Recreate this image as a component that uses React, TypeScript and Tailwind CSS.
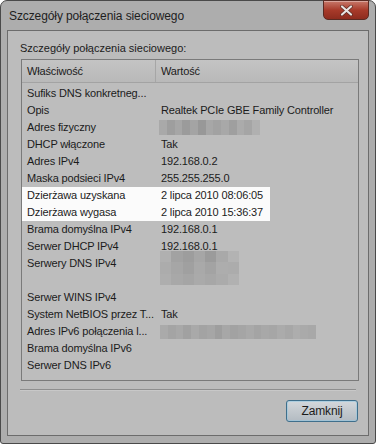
import React from "react";

type Row = { label: string; value?: string; blur?: "mac" | "dns" | "ipv6"; tall?: boolean; hl?: boolean };

const rows: Row[] = [
  { label: "Sufiks DNS konkretneg..." },
  { label: "Opis", value: "Realtek PCIe GBE Family Controller" },
  { label: "Adres fizyczny", blur: "mac" },
  { label: "DHCP włączone", value: "Tak" },
  { label: "Adres IPv4", value: "192.168.0.2" },
  { label: "Maska podsieci IPv4", value: "255.255.255.0" },
  { label: "Dzierżawa uzyskana", value: "2 lipca 2010 08:06:05", hl: true },
  { label: "Dzierżawa wygasa", value: "2 lipca 2010 15:36:37", hl: true },
  { label: "Brama domyślna IPv4", value: "192.168.0.1" },
  { label: "Serwer DHCP IPv4", value: "192.168.0.1" },
  { label: "Serwery DNS IPv4", blur: "dns", tall: true },
  { label: "Serwer WINS IPv4" },
  { label: "System NetBIOS przez T...", value: "Tak" },
  { label: "Adres IPv6 połączenia l...", blur: "ipv6" },
  { label: "Brama domyślna IPv6" },
  { label: "Serwer DNS IPv6" },
];

// pixelated (blurred out) values
const macShades = ["bg-[#a9a9a9]", "bg-[#9e9e9e]", "bg-[#a6a6a6]", "bg-[#9b9b9b]", "bg-[#a4a4a4]", "bg-[#989898]", "bg-[#a7a7a7]", "bg-[#a2a2a2]", "bg-[#a8a8a8]", "bg-[#9f9f9f]", "bg-[#ababab]", "bg-[#a5a5a5]", "bg-[#b0b0b0]"];
const dnsShades = [
  ["bg-[#b0b0b0]", "bg-[#a2a2a2]", "bg-[#9d9d9d]", "bg-[#a6a6a6]", "bg-[#9b9b9b]", "bg-[#a9a9a9]", "bg-[#b3b3b3]"],
  ["bg-[#acacac]", "bg-[#a6a6a6]", "bg-[#a0a0a0]", "bg-[#a9a9a9]", "bg-[#a3a3a3]", "bg-[#adadad]", "bg-[#acacac]"],
  ["bg-[#aeaeae]", "bg-[#a8a8a8]", "bg-[#a5a5a5]", "bg-[#aaaaaa]", "bg-[#a7a7a7]", "bg-[#ababab]", "bg-[#b1b1b1]"],
];
const ipv6Shades = ["bg-[#aaaaaa]", "bg-[#a4a4a4]", "bg-[#a8a8a8]", "bg-[#a1a1a1]", "bg-[#a9a9a9]", "bg-[#a3a3a3]", "bg-[#a6a6a6]", "bg-[#9e9e9e]", "bg-[#a7a7a7]", "bg-[#a2a2a2]", "bg-[#a5a5a5]", "bg-[#a9a9a9]", "bg-[#a4a4a4]", "bg-[#a8a8a8]", "bg-[#a6a6a6]", "bg-[#ababab]", "bg-[#a7a7a7]", "bg-[#adadad]", "bg-[#aaaaaa]", "bg-[#a8a8a8]"];

function Blur({ kind }: { kind: "mac" | "dns" | "ipv6" }) {
  if (kind === "mac") {
    return (
      <div className="flex h-[15px] w-[101px] -ml-[2px]">
        {macShades.map((c, i) => (
          <div key={i} className={`flex-1 ${c}`} />
        ))}
      </div>
    );
  }
  if (kind === "ipv6") {
    return (
      <div className="flex h-[14px] w-[156px] -ml-[1px]">
        {ipv6Shades.map((c, i) => (
          <div key={i} className={`flex-1 ${c}`} />
        ))}
      </div>
    );
  }
  return (
    <div className="flex flex-col w-[79px] h-[34px] -ml-[1px] mt-[-6px]">
      {dnsShades.map((line, r) => (
        <div key={r} className="flex flex-1">
          {line.map((c, i) => (
            <div key={i} className={`flex-1 ${c}`} />
          ))}
        </div>
      ))}
    </div>
  );
}

function ListRow({ row }: { row: Row }) {
  return (
    <div className={`flex ${row.tall ? "h-[34px] items-start" : "h-[17px] items-center"}`}>
      <div className={`w-[134px] pl-[5px] whitespace-nowrap overflow-hidden ${row.tall ? "leading-[17px]" : ""}`}>{row.label}</div>
      <div className={`flex-1 pl-[5px] whitespace-nowrap ${row.tall ? "pt-[2px]" : ""}`}>
        {row.blur ? <Blur kind={row.blur} /> : row.value}
      </div>
    </div>
  );
}

export default function App() {
  const before = rows.slice(0, 6);
  const hl = rows.slice(6, 8);
  const after = rows.slice(8);

  return (
    <div
      className="w-[376px] h-[444px] bg-[#adadad] border border-[#4a4a4a] rounded-t-[7px] rounded-b-[3px] flex flex-col text-[#1b1b1b] text-[11px] tracking-[-0.15px]"
      style={{ fontFamily: '"Liberation Sans", Arial, sans-serif' }}
    >
      {/* Title bar */}
      <div className="h-[29px] flex items-start justify-between">
        <div className="pl-[8px] pt-[6px] text-[12px] tracking-[-0.1px] text-[#1e1e1e]">Szczegóły połączenia sieciowego</div>
        <div className="mr-[6px] -mt-[1px] w-[46px] h-[20px] rounded-b-[5px] border border-[#5a2a22] bg-gradient-to-b from-[#c7786a] via-[#a83a2a] to-[#8e2c1e] flex items-center justify-center shadow-[inset_0_1px_0_rgba(255,255,255,0.35)]">
          <svg width="13" height="11" viewBox="0 0 13 11">
            <path d="M2 1.5 L11 9.5 M11 1.5 L2 9.5" stroke="#5b2a22" strokeWidth="3.6" strokeLinecap="round" />
            <path d="M2 1.5 L11 9.5 M11 1.5 L2 9.5" stroke="#e9e4e2" strokeWidth="2.2" strokeLinecap="round" />
          </svg>
        </div>
      </div>

      {/* Client area */}
      <div className="mx-[6px] mb-[7px] flex-1 bg-[#bcbcbc] border border-[#6c6c6c] flex flex-col">
        <div className="pl-[12px] pt-[10px] h-[28px] leading-[14px] tracking-normal">Szczegóły połączenia sieciowego:</div>

        {/* List view */}
        <div className="ml-[13px] mr-[9px] h-[322px] border border-[#7a7a7a] bg-[#bdbdbd] flex flex-col">
          <div className="h-[23px] flex border-b border-[#a3a3a3] bg-gradient-to-b from-[#c4c4c4] to-[#b9b9b9]">
            <div className="w-[134px] pl-[5px] flex items-center border-r border-[#a6a6a6]">Właściwość</div>
            <div className="flex-1 pl-[5px] flex items-center">Wartość</div>
          </div>
          <div className="pt-[2px] flex flex-col">
            {before.map((r) => (
              <ListRow key={r.label} row={r} />
            ))}
            <div className="w-[248px] bg-[#fbfbfb]">
              {hl.map((r) => (
                <ListRow key={r.label} row={r} />
              ))}
            </div>
            {after.map((r) => (
              <ListRow key={r.label} row={r} />
            ))}
          </div>
        </div>

        <div className="mx-[12px] mt-[8px] h-[2px] border-t border-[#8e8e8e] border-b border-b-[#c8c8c8]" />

        <div className="flex justify-end pr-[10px] pt-[9px]">
          <button className="w-[72px] h-[22px] rounded-[3px] border border-[#3f6f8c] bg-gradient-to-b from-[#d3d8dc] via-[#c3c9ce] to-[#b3bbc2] shadow-[inset_0_0_0_1px_rgba(150,200,225,0.6)] text-[12px] text-[#1b1b1b]">
            Zamknij
          </button>
        </div>
      </div>
    </div>
  );
}
